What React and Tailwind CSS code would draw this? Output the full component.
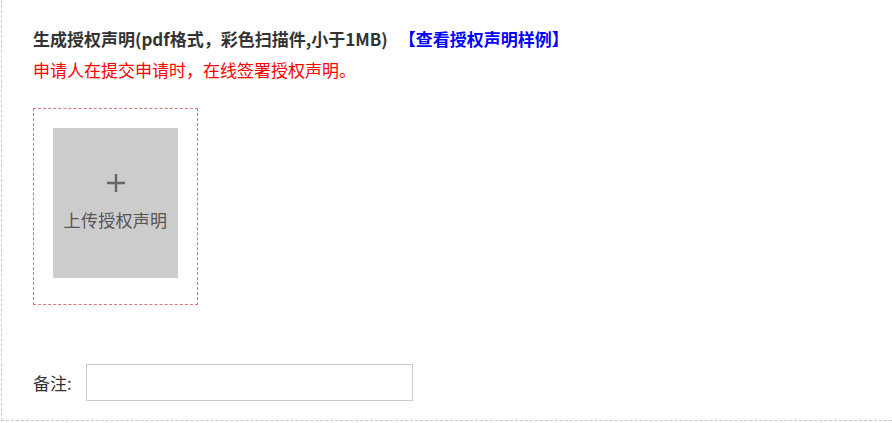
import React from 'react'

const App = () => {
  return (
    <div className="w-[892px] h-[423px] bg-white" style={{ fontFamily: '"Noto Sans CJK SC", "Noto Sans", sans-serif' }}>
      <div className="ml-px h-[421px] border-l border-b border-dashed border-[#c8c8c8] pl-[31px] pt-[23px] text-[17px]">
        {/* 标题 */}
        <div className="leading-[31px] font-bold text-[#333]">
          生成授权声明(pdf格式，彩色扫描件,小于1MB)
          <a className="ml-[11px] text-[#0000ff] cursor-pointer">【查看授权声明样例】</a>
        </div>
        <div className="leading-[31px] text-[#ff0000]">申请人在提交申请时，在线签署授权声明。</div>

        {/* 上传区域 */}
        <div className="mt-[23px] w-[165px] h-[197px] border border-dashed border-[#d9777b] pt-[19px] pl-[19px]">
          <div className="w-[125px] h-[150px] bg-[#cccccc] flex flex-col items-center justify-center cursor-pointer">
            <svg width="22" height="22" viewBox="0 0 22 22" className="-mt-[4px]">
              <path d="M11 2 V20 M2 11 H20" stroke="#666" strokeWidth="2.4" fill="none" />
            </svg>
            <div className="mt-[16px] text-[#555] leading-[20px] tracking-[0.3px]">上传授权声明</div>
          </div>
        </div>

        {/* 备注 */}
        <div className="mt-[59px] flex items-center">
          <label className="text-[#333] w-[53px]">备注:</label>
          <input type="text" className="w-[327px] h-[37px] border border-[#cccccc] outline-none px-2" />
        </div>
      </div>
    </div>
  )
}

export default App
